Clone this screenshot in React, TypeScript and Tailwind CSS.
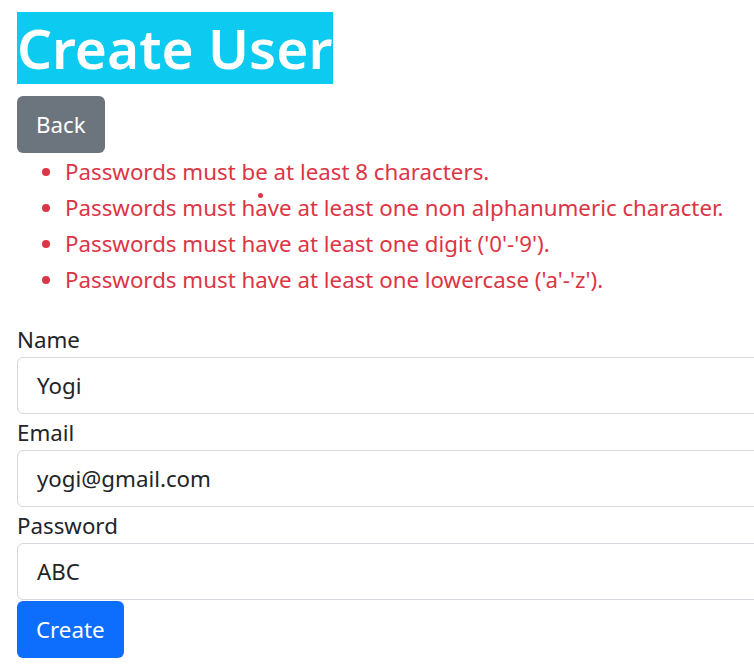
import React from "react";

const errors = [
  "Passwords must be at least 8 characters.",
  "Passwords must have at least one non alphanumeric character.",
  "Passwords must have at least one digit ('0'-'9').",
  "Passwords must have at least one lowercase ('a'-'z').",
];

function Field({ label, value }: { label: string; value: string }) {
  return (
    <div className="flex flex-col">
      <label className="h-[36px] leading-[37px] text-[#212529]">{label}</label>
      <div className="w-[800px] h-[57px] border border-[#d5d8dc] rounded-[6px] bg-white flex items-center pl-[19px] pt-[1px] text-[#212529]">
        {value}
      </div>
    </div>
  );
}

export default function App() {
  return (
    <div
      className="relative w-[754px] h-[667px] overflow-hidden bg-white pl-[17px] pt-[12px] text-[22.3px] leading-[36px]"
      style={{ fontFamily: '"Noto Sans", "Open Sans", sans-serif' }}
    >
      <h1 className="w-fit bg-[#0dcaf0] text-white font-semibold text-[55px] leading-[72px] h-[72px] mb-[12px] pr-[1px]">
        Create User
      </h1>
      <button className="h-[57px] px-[19px] rounded-[6px] bg-[#6c757d] text-white leading-[36px]">
        Back
      </button>
      <ul className="list-disc pl-[48px] mb-[24px] text-[#dc3545] marker:text-[#dc3545]">
        {errors.map((e) => (
          <li key={e} className="h-[36px] leading-[37px] whitespace-nowrap">
            {e}
          </li>
        ))}
      </ul>
      <div className="flex flex-col">
        <Field label="Name" value="Yogi" />
        <Field label="Email" value="yogi@gmail.com" />
        <Field label="Password" value="ABC" />
      </div>
      <button className="mt-[1px] h-[57px] px-[19px] rounded-[6px] bg-[#0d6efd] text-white leading-[36px]">
        Create
      </button>
      <span className="absolute left-[258px] top-[193px] w-[5px] h-[5px] rounded-full bg-[#dc3545]" />
    </div>
  );
}
